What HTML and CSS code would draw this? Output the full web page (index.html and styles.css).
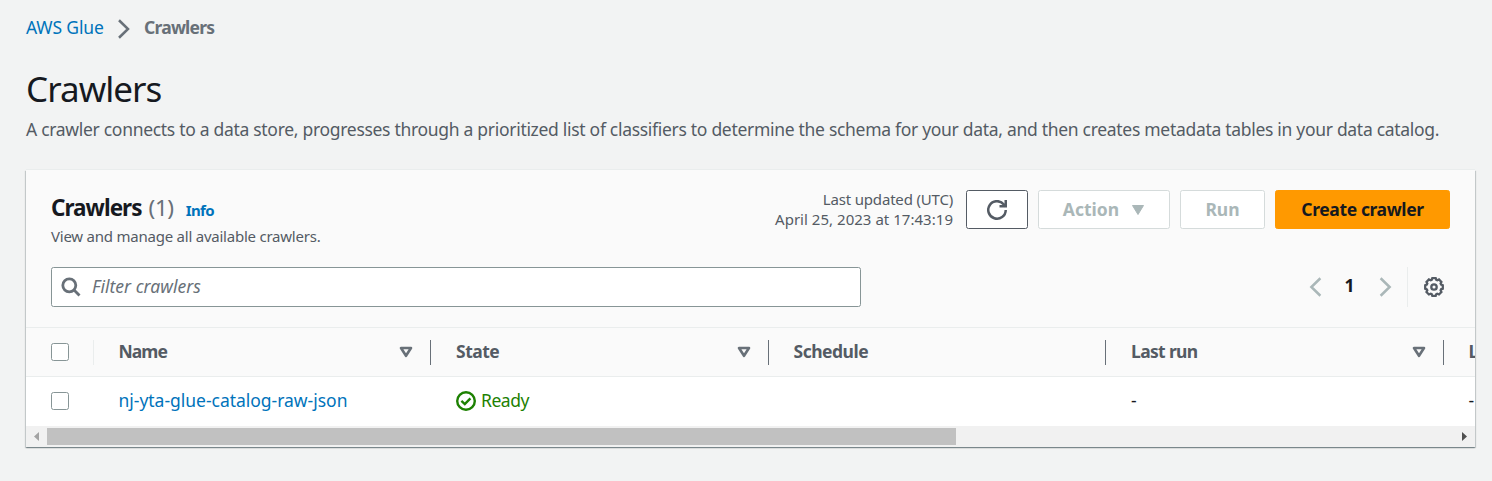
FILE: index.html
```html
<!DOCTYPE html>
<html lang="en">
<head>
<meta charset="utf-8">
<title>Crawlers</title>
<link rel="stylesheet" href="styles.css">
</head>
<body>
<nav class="breadcrumb">
  <a class="crumb-link" href="#">AWS Glue</a>
  <svg class="crumb-sep" width="20" height="20" viewBox="0 0 16 16"><path d="M4 1 11.200 8 4 15"/></svg>
  <span class="crumb-current">Crawlers</span>
</nav>
<header class="page-header">
  <h1 class="page-title">Crawlers</h1>
  <p class="page-desc">A crawler connects to a data store, progresses through a prioritized list of classifiers to determine the schema for your data, and then creates metadata tables in your data catalog.</p>
</header>
<main class="panel">
  <div class="panel-top">
    <div class="heading">
      <div class="heading-line">
        <h2 class="panel-title">Crawlers</h2><span class="count">(1)</span><a class="info" href="#">Info</a>
      </div>
      <p class="panel-desc">View and manage all available crawlers.</p>
    </div>
    <div class="actions">
      <div class="updated"><span class="updated-label">Last updated (UTC)</span><span class="updated-time">April 25, 2023 at 17:43:19</span></div>
      <button class="btn btn-refresh" aria-label="Refresh"><svg width="20" height="20" viewBox="0 0 16 16"><path d="M15 8a7 7 0 1 1-1.500-4.400L15 5"/><path d="M10 5h5V0"/></svg></button>
      <button class="btn btn-action" disabled><span class="action-text">Action</span><svg width="14" height="12" viewBox="0 0 14 12"><path d="M1.500 1.500h11L7 10.500z"/></svg></button>
      <button class="btn btn-run" disabled>Run</button>
      <button class="btn btn-primary"><span class="create-text">Create crawler</span></button>
    </div>
  </div>
  <div class="tools">
    <div class="search">
      <svg width="20" height="20" viewBox="0 0 20 20"><circle cx="8.300" cy="8.300" r="6.500"/><path d="M12.800 12.800 18.500 18.500"/></svg>
      <span class="placeholder">Filter crawlers</span>
    </div>
    <div class="pager">
      <svg class="arrow" width="20" height="20" viewBox="0 0 16 16"><path d="M11.500 1 4.300 8l7.200 7"/></svg>
      <span class="page-no">1</span>
      <svg class="arrow" width="20" height="20" viewBox="0 0 16 16"><path d="M4.500 1 11.700 8 4.500 15"/></svg>
    </div>
    <div class="settings">
      <svg class="gear" width="20" height="20" viewBox="0 0 20 20"><path d="M8.300 1.200h3.400l.6 1.600 1 .4 1.700-.8 2.400 2.500-.8 1.700.5 1 1.700.7v3.400l-1.700.6-.5 1 .8 1.800-2.400 2.400-1.800-.8-1 .5-.5 1.600H8.300l-.6-1.600-1-.5-1.800.8-2.400-2.400.8-1.800-.5-1-1.600-.6V8.300l1.600-.7.5-1-.8-1.700 2.400-2.500 1.800.8 1-.4z"/><circle cx="10" cy="10" r="2.700"/></svg>
    </div>
  </div>
  <div class="table">
    <div class="row head">
      <div class="cell check"><span class="box"></span></div>
      <div class="cell sortable"><span class="h-name">Name</span><svg class="sort" width="14" height="12" viewBox="0 0 14 12"><path d="M2 2h10L7 9.800z"/></svg></div>
      <div class="cell sortable"><span class="h-state">State</span><svg class="sort" width="14" height="12" viewBox="0 0 14 12"><path d="M2 2h10L7 9.800z"/></svg></div>
      <div class="cell"><span class="h-schedule">Schedule</span></div>
      <div class="cell sortable"><span class="h-last">Last run</span><svg class="sort" width="14" height="12" viewBox="0 0 14 12"><path d="M2 2h10L7 9.800z"/></svg></div>
      <div class="cell"><span>L</span></div>
    </div>
    <div class="row body-row">
      <div class="cell check"><span class="box"></span></div>
      <div class="cell"><a class="name-link" href="#">nj-yta-glue-catalog-raw-json</a></div>
      <div class="cell status"><svg width="20" height="20" viewBox="0 0 20 20"><circle cx="10" cy="10" r="8.800"/><path d="m5.400 9.800 3.400 3.200 5.600-5.700"/></svg><span class="ready">Ready</span></div>
      <div class="cell"></div>
      <div class="cell">-</div>
      <div class="cell">-</div>
    </div>
  </div>
  <div class="scrollbar">
    <svg class="sb-left" width="21" height="21" viewBox="0 0 21 21"><path d="M13 6v9l-5-4.500z"/></svg>
    <div class="thumb"></div>
    <svg class="sb-right" width="21" height="21" viewBox="0 0 21 21"><path d="M8 6v9l5-4.500z"/></svg>
  </div>
</main>
</body>
</html>
```
FILE: styles.css
```css
* { box-sizing: border-box; }
body {
  margin: 0;
  padding: 0 17px 0 26px;
  height: 481px;
  overflow: hidden;
  background: #f2f3f3;
  color: #16191f;
  font: 17.5px/27.5px "Noto Sans", "Open Sans", sans-serif;
}
a { color: #0073bb; text-decoration: none; }
h1, h2, p { margin: 0; }
svg { display: block; flex: none; fill: none; stroke: currentColor; }
span, a, h1, h2, p { white-space: nowrap; }

.breadcrumb { display: flex; align-items: center; height: 28px; margin-top: 14px; color: #687078; }
.crumb-link { width: 78px; letter-spacing: -.15px; }
.crumb-sep { margin: 2px 10px 0; stroke-width: 2; }
.crumb-current { font-weight: 700; letter-spacing: -.77px; }

.page-header { padding-top: 24px; height: 128px; }
.page-title { font-size: 35px; line-height: 45px; font-weight: 400; letter-spacing: -.95px; }
.page-desc { margin-top: 5px; color: #545b64; letter-spacing: -.3px; }

.panel {
  display: flex;
  flex-direction: column;
  width: 1449px;
  height: 277px;
  background: #fff;
  overflow: hidden;
  box-shadow: 0 1px 1px 0 rgba(0, 28, 36, .3), 1px 1px 1px 0 rgba(0, 28, 36, .15), -1px 1px 1px 0 rgba(0, 28, 36, .15), 0 -1px 0 0 #eaeded;
}
.panel-top { display: flex; justify-content: space-between; height: 97px; padding: 20px 25px 0; background: #fafafa; }
.heading-line { display: flex; align-items: baseline; height: 36px; line-height: 36px; }
.panel-title { font-size: 22.5px; letter-spacing: -.97px; }
.count { margin-left: 7px; font-size: 22.5px; color: #687078; letter-spacing: -.4px; }
.info { margin-left: 12px; font-size: 15px; font-weight: 700; letter-spacing: -.6px; }
.panel-desc { font-size: 15px; line-height: 20px; color: #545b64; letter-spacing: -.23px; }
.actions { display: flex; gap: 10px; }
.updated { display: flex; flex-direction: column; align-items: flex-end; margin: -1px 3px 0 0; font-size: 15px; line-height: 20px; color: #545b64; }
.updated-label { letter-spacing: -.18px; }
.updated-time { letter-spacing: .03px; }
.btn { display: flex; align-items: center; justify-content: center; height: 39px; padding: 0 0 1px; border: 1px solid #545b64; border-radius: 2.5px; background: #fff; color: #545b64; font: 700 17.5px/25px "Noto Sans", "Open Sans", sans-serif; }
.btn:disabled { border-color: #d5dbdb; color: #aab7b8; }
.btn-refresh { width: 62px; }
.btn-refresh svg { margin-top: 1px; stroke-width: 2; }
.btn-action { width: 132px; gap: 12px; }
.btn-action svg { margin-top: 1px; fill: currentColor; stroke-linejoin: round; }
.btn-run { width: 85px; }
.btn-primary { width: 175px; border-color: #ff9900; background: #ff9900; color: #16191f; }
.create-text { letter-spacing: -.38px; }

.tools { display: flex; align-items: flex-start; height: 60px; padding: 0 25px; background: #fafafa; }
.search { display: flex; align-items: center; width: 810px; height: 40px; padding-left: 9px; gap: 11px; border: 1px solid #879596; border-radius: 2.5px; background: #fff; color: #687078; }
.search svg { stroke-width: 2.8; }
.placeholder { font-style: italic; letter-spacing: .03px; }
.pager { display: flex; align-items: center; height: 40px; margin-left: auto; color: #16191f; }
.arrow { color: #aab7b8; stroke-width: 2; }
.page-no { width: 49px; padding: 0 2px 2px 0; text-align: center; font-weight: 700; }
.settings { display: flex; align-items: center; justify-content: flex-end; width: 43px; height: 40px; margin-left: 12px; padding-right: 6px; border-left: 1px solid #eaeded; color: #545b64; }
.gear { stroke-width: 2.3; }

.table { width: 1449px; overflow: hidden; }
.row { display: grid; grid-template-columns: 67.5px repeat(5, 337.5px); width: 1755px; height: 49px; }
.head { height: 50px; background: #fafafa; border-top: 1px solid #eaeded; border-bottom: 1px solid #eaeded; color: #545b64; font-weight: 700; }
.body-row { padding-bottom: 1px; }
.cell { position: relative; display: flex; align-items: center; padding-left: 25px; }
.head .cell::after { content: ""; position: absolute; right: 0; top: 12px; width: 1px; height: 25px; background: #687078; }
.head .check::after { background: #eaeded; }
.box { width: 18px; height: 18px; border: 1px solid #879596; border-radius: 2.5px; background: #fff; }
.sortable { justify-content: space-between; padding-right: 18px; }
.sort { color: #687078; stroke-width: 2.6; stroke-linejoin: round; }
.h-name { letter-spacing: -.95px; }
.h-state, .h-schedule { letter-spacing: -.5px; }
.h-last { letter-spacing: -.65px; }
.name-link { letter-spacing: -.02px; }
.status { gap: 5px; color: #1d8102; }
.status svg { stroke-width: 2.4; }
.ready { letter-spacing: -.45px; }

.scrollbar { display: flex; align-items: center; height: 21px; background: #f1f1f1; }
.thumb { width: 909px; height: 17px; background: #c1c1c1; }
.sb-left { fill: #a3a3a3; stroke: none; }
.sb-right { margin-left: auto; fill: #505050; stroke: none; }
```
